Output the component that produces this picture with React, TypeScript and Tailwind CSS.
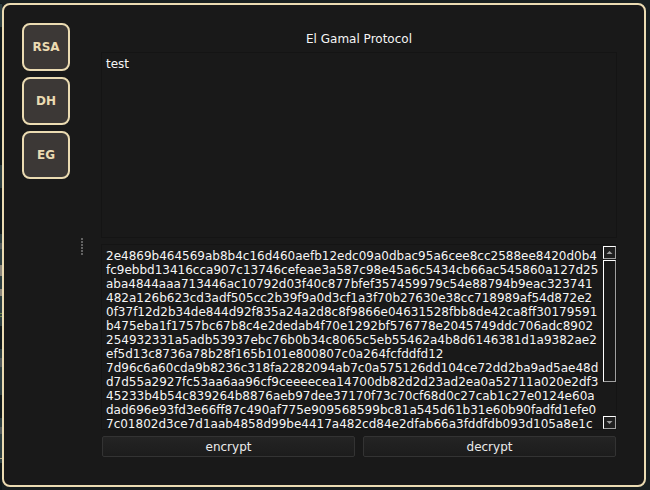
const output = [
  '2e4869b464569ab8b4c16d460aefb12edc09a0dbac95a6cee8cc2588ee8420d0b4',
  'fc9ebbd13416cca907c13746cefeae3a587c98e45a6c5434cb66ac545860a127d25',
  'aba4844aaa713446ac10792d03f40c877bfef357459979c54e88794b9eac323741',
  '482a126b623cd3adf505cc2b39f9a0d3cf1a3f70b27630e38cc718989af54d872e2',
  '0f37f12d2b34de844d92f835a24a2d8c8f9866e04631528fbb8de42ca8ff30179591',
  'b475eba1f1757bc67b8c4e2dedab4f70e1292bf576778e2045749ddc706adc8902',
  '254932331a5adb53937ebc76b0b34c8065c5eb55462a4b8d6146381d1a9382ae2',
  'ef5d13c8736a78b28f165b101e800807c0a264fcfddfd12',
  '7d96c6a60cda9b8236c318fa2282094ab7c0a575126dd104ce72dd2ba9ad5ae48d',
  'd7d55a2927fc53aa6aa96cf9ceeeecea14700db82d2d23ad2ea0a52711a020e2df3',
  '45233b4b54c839264b8876aeb97dee37170f73c70cf68d0c27cab1c27e0124e60a',
  'dad696e93fd3e66ff87c490af775e909568599bc81a545d61b31e60b90fadfd1efe0',
  '7c01802d3ce7d1aab4858d99be4417a482cd84e2dfab66a3fddfdb093d105a8e1c',
];

function ProtocolButton({ label }: { label: string }) {
  return (
    <button className="flex h-12 w-12 items-center justify-center rounded-[8px] border-2 border-[#ebdbb2] bg-[#3c3836] text-[12px] leading-[14px] font-bold text-[#ebdbb2]">
      {label}
    </button>
  );
}

function ActionButton({ label }: { label: string }) {
  return (
    <button className="flex h-[21px] flex-1 items-start justify-center rounded-[2px] border border-[#333333] bg-linear-to-b from-[#242424] to-[#1c1c1c] pt-[3px] text-[12px] leading-[14px] text-[#ebebeb]">
      {label}
    </button>
  );
}

function ScrollArrow({ down = false }: { down?: boolean }) {
  return (
    <div className="flex h-[13px] w-[13px] items-center justify-center border border-t-white border-r-[#a0a0a0] border-b-[#a0a0a0] border-l-white bg-[#202020]">
      <svg width="7" height="3" viewBox="0 0 7 3" fill="#a0a0a0">
        <path d={down ? 'M.5 0h6l-3 3z' : 'M.5 3h6l-3-3z'} />
      </svg>
    </div>
  );
}

export default function App() {
  return (
    <div className="flex h-[490px] w-[650px] overflow-hidden bg-[#192021] pt-[3px] font-['DejaVu_Sans',sans-serif] text-[12px] leading-[14px] text-[#f5f5f5]">
      <div className="flex w-[2px] shrink-0 flex-col bg-[#10181a]">
        <div className="mt-px h-[23px] bg-[#2b3d40]" />
        <div className="mt-[138px] h-[23px] bg-[#2b3d40]" />
        <div className="mt-[46px] flex h-[92px] flex-col bg-[#2b3d40]">
          <div className="mt-[9px] h-[6px] bg-[#50585a]" />
          <div className="mt-[16px] h-[11px] bg-[#8a857a]" />
          <div className="mt-[13px] h-[7px] bg-[#8a857a]" />
          <div className="mt-[17px] h-px bg-[#6f8a4a]" />
          <div className="mt-[2px] h-px bg-[#6f8a4a]" />
        </div>
        <div className="mt-[23px] flex h-[46px] flex-col bg-[#2b3d40]">
          <div className="mt-[9px] h-[9px] bg-[#50585a]" />
        </div>
        <div className="mt-[23px] flex h-[45px] flex-col bg-[#2b3d40]">
          <div className="mt-[9px] h-[7px] bg-[#50585a]" />
          <div className="mt-[24px] h-px bg-[#b0a582]" />
        </div>
      </div>
      <main className="flex h-[484px] w-[644px] shrink-0 rounded-[8px] border-2 border-[#ebdbb2] bg-[#191919]">
        <nav className="flex w-[66px] flex-col gap-1.5 pt-[18px] pl-[18px]">
          <ProtocolButton label="RSA" />
          <ProtocolButton label="DH" />
          <ProtocolButton label="EG" />
        </nav>
        <div className="flex w-[31px] flex-col gap-px pt-[233px] pl-[11px]">
          {[0, 1, 2, 3, 4, 5].map((dot) => (
            <div key={dot} className="h-[2px] w-[2px] bg-[#626262]" />
          ))}
        </div>
        <section className="flex w-[516px] flex-col pt-[27px]">
          <h1 className="h-[20px] text-center">El Gamal Protocol</h1>
          <div className="h-[186px] shrink-0 border border-[#141414] px-1 pt-1">test</div>
          <div className="mt-1.5 flex h-[186px] shrink-0 justify-between overflow-hidden border border-[#141414] pl-1">
            <div className="w-[497px] shrink-0 pt-[4px] whitespace-nowrap">
              {output.map((line) => (
                <div key={line}>{line}</div>
              ))}
            </div>
            <div className="flex h-[184px] w-[13px] shrink-0 flex-col pt-px">
              <ScrollArrow />
              <div className="mt-px h-[122px] w-[13px] border border-t-white border-r-[#a0a0a0] border-b-[#a0a0a0] border-l-white" />
              <div className="mt-auto">
                <ScrollArrow down />
              </div>
            </div>
          </div>
          <div className="mt-1.5 flex gap-2 px-px">
            <ActionButton label="encrypt" />
            <ActionButton label="decrypt" />
          </div>
        </section>
      </main>
    </div>
  );
}
